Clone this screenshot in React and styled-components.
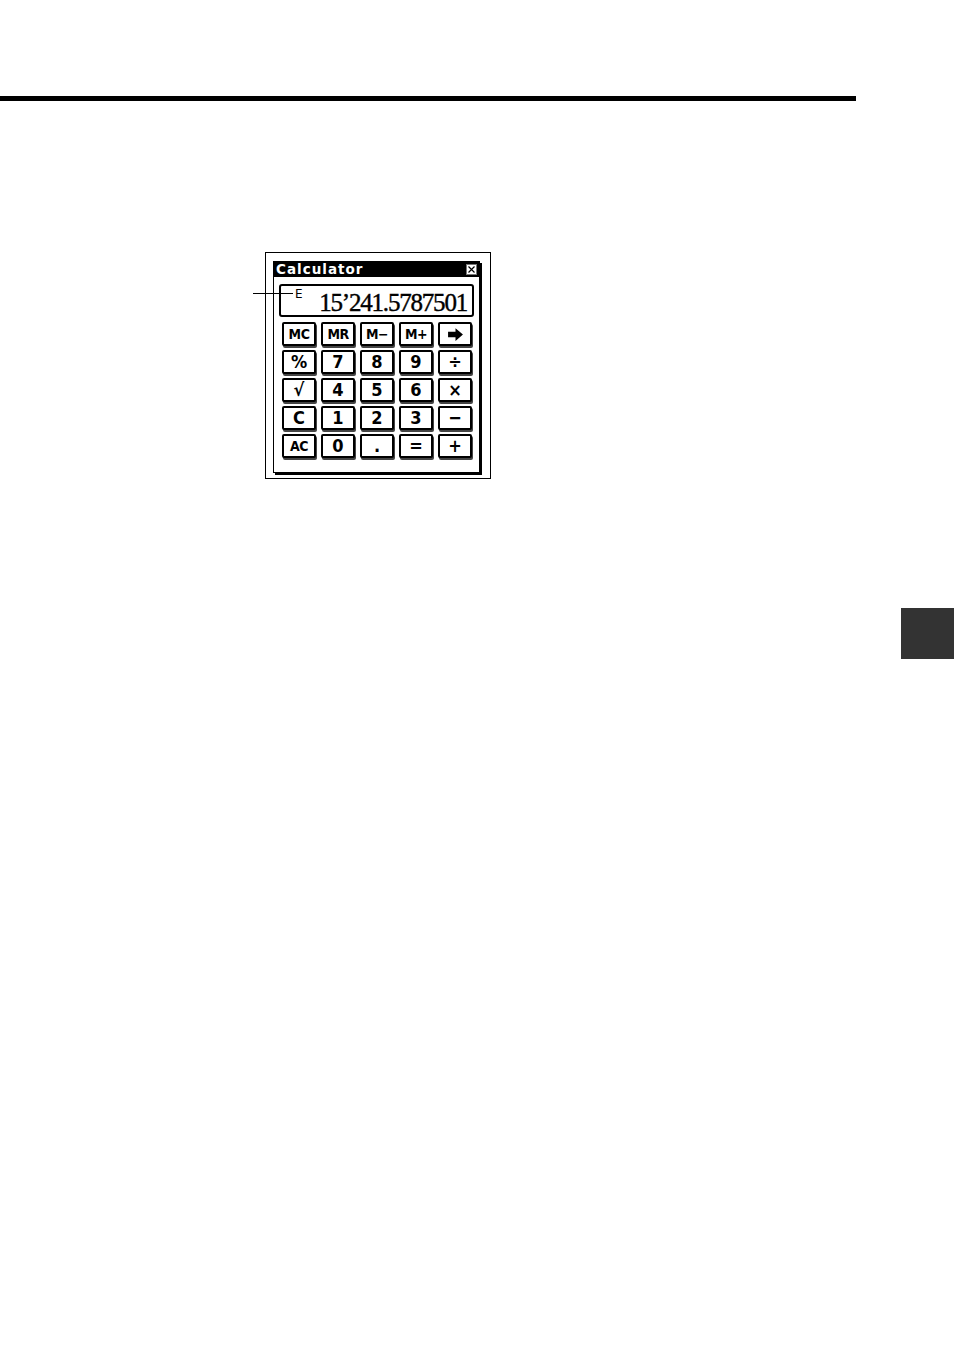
import React from "react";
import styled, { createGlobalStyle } from "styled-components";

const GlobalStyle = createGlobalStyle`
  html, body {
    margin: 0;
    padding: 0;
    background: #fff;
  }
  body {
    font-family: "DejaVu Sans", "Liberation Sans", sans-serif;
    color: #000;
  }
`;

const keys = [
  ["MC", "MR", "M−", "M+", "arrow"],
  ["%", "7", "8", "9", "÷"],
  ["√", "4", "5", "6", "×"],
  ["C", "1", "2", "3", "−"],
  ["AC", "0", ".", "=", "+"],
];

const ArrowIcon = () => (
  <svg width="17" height="13" viewBox="0 0 16 12">
    <path d="M1 3.5h7V0l7 6-7 6V8.5H1z" fill="#000" />
  </svg>
);

const CloseIcon = () => (
  <svg width="11" height="11" viewBox="0 0 11 11">
    <rect x="0.5" y="0.5" width="10" height="10" fill="#fff" stroke="#777" />
    <path d="M2.5 2.5l6 6M8.5 2.5l-6 6" stroke="#000" strokeWidth="1.2" />
  </svg>
);

export default function App() {
  return (
    <Page>
      <GlobalStyle />
      <Rule />
      <Figure>
        <Leader />
        <Window>
          <TitleBar>
            <Title>Calculator</Title>
            <CloseIcon />
          </TitleBar>
          <Display>
            <Flag>E</Flag>
            <Readout>15’241.5787501</Readout>
          </Display>
          <Keypad>
            {keys.flat().map((k, i) => (
              <Key key={i} $wide={k.length > 1 && k !== "arrow"}>
                {k === "arrow" ? <ArrowIcon /> : k}
              </Key>
            ))}
          </Keypad>
        </Window>
      </Figure>
      <SideTab />
    </Page>
  );
}

const Page = styled.div`
  width: 954px;
  min-height: 1351px;
  padding-top: 96px;
  box-sizing: border-box;
  display: flex;
  flex-direction: column;
`;

const Rule = styled.div`
  width: 856px;
  height: 5px;
  background: #000;
`;

const Figure = styled.div`
  position: relative;
  margin: 151px 0 0 265px;
  width: 226px;
  height: 227px;
  border: 1px solid #000;
  padding: 8px 0 0 7px;
  box-sizing: border-box;
`;

const Leader = styled.div`
  position: absolute;
  left: -13px;
  top: 40px;
  width: 40px;
  height: 1px;
  background: #000;
`;

const Window = styled.div`
  width: 207px;
  height: 212px;
  box-sizing: border-box;
  border: 1px solid #000;
  box-shadow: 2px 2px 0 #000;
  background: #fff;
  display: flex;
  flex-direction: column;
`;

const TitleBar = styled.div`
  height: 15px;
  background: #000;
  display: flex;
  align-items: center;
  justify-content: space-between;
  padding: 0 2px 0 2px;
`;

const Title = styled.span`
  color: #fff;
  font-family: "DejaVu Sans", sans-serif;
  font-weight: bold;
  font-size: 13.5px;
  letter-spacing: 1px;
  line-height: 15px;
`;

const Display = styled.div`
  margin: 7px 5px 0 5px;
  height: 33px;
  box-sizing: border-box;
  border: 2px solid #000;
  border-radius: 3px;
  display: flex;
  align-items: flex-start;
  justify-content: space-between;
  padding: 0 5px 0 14px;
`;

const Flag = styled.span`
  font-family: "DejaVu Sans", sans-serif;
  font-size: 12px;
  line-height: 14px;
  margin-top: 1px;
`;

const Readout = styled.span`
  font-family: "Liberation Serif", serif;
  font-size: 25px;
  line-height: 33px;
  letter-spacing: -1.2px;
  -webkit-text-stroke: 0.4px #000;
  white-space: nowrap;
`;

const Keypad = styled.div`
  margin: 5px 0 0 8px;
  display: grid;
  grid-template-columns: repeat(5, 34px);
  grid-auto-rows: 24px;
  column-gap: 5px;
  row-gap: 4px;
`;

const Key = styled.div`
  box-sizing: border-box;
  border: 2px solid #000;
  border-radius: 2px;
  box-shadow: 1px 2px 0 #444;
  background: #fff;
  display: flex;
  align-items: center;
  justify-content: center;
  font-family: "DejaVu Sans Condensed", "DejaVu Sans", sans-serif;
  font-weight: bold;
  font-size: ${(p) => (p.$wide ? "14px" : "18px")};
  letter-spacing: ${(p) => (p.$wide ? "-0.5px" : "0")};
  line-height: 1;
`;

const SideTab = styled.div`
  margin: 129px 0 0 auto;
  width: 53px;
  height: 51px;
  background: #333;
`;
